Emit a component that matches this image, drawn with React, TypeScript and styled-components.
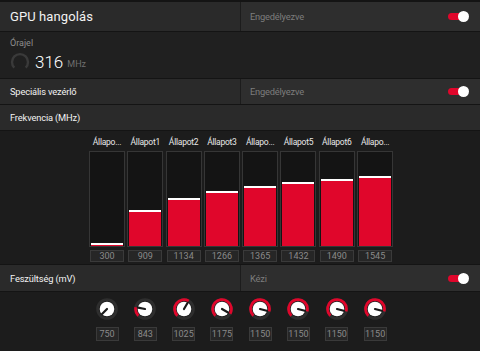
import React from "react";
import styled, { createGlobalStyle } from "styled-components";

const Global = createGlobalStyle`
  html, body { margin: 0; padding: 0; background: #0f0f0f; }
  body { font-family: Roboto, "Noto Sans", "Liberation Sans", sans-serif; }
  * { box-sizing: border-box; }
`;

const RED = "#e0062b";

const Page = styled.div`
  width: 480px;
  height: 351px;
  padding-top: 2px;
  display: flex;
  flex-direction: column;
  gap: 1px;
  background: #141414;
  overflow: hidden;
`;

const BarRow = styled.div<{ $h: number; $split?: boolean }>`
  height: ${(p) => p.$h}px;
  display: grid;
  grid-template-columns: ${(p) => (p.$split ? "240px 240px" : "1fr")};
  background: #2a2a2a;
  flex-shrink: 0;
`;

const Cell = styled.div`
  display: flex;
  align-items: center;
  padding-left: 10px;
`;

const RightCell = styled.div`
  display: flex;
  align-items: center;
  justify-content: space-between;
  padding-left: 9px;
  padding-right: 11px;
  background: #2e2e2e;
  border-left: 1px solid #1c1c1c;
`;

const Title = styled.span<{ $size?: number }>`
  color: #f2f2f2;
  font-size: ${(p) => p.$size ?? 9.3}px;
  letter-spacing: ${(p) => (p.$size ? "0.1px" : "-0.15px")};
`;

const Muted = styled.span`
  color: #7d7d7d;
  font-size: 9.3px;
  letter-spacing: -0.2px;
`;

const ToggleWrap = styled.div`
  position: relative;
  width: 21px;
  height: 11px;
`;

const Track = styled.div`
  position: absolute;
  left: 0;
  top: 2px;
  width: 16px;
  height: 7px;
  border-radius: 4px;
  background: ${RED};
`;

const Thumb = styled.div`
  position: absolute;
  right: 0;
  top: 0;
  width: 11px;
  height: 11px;
  border-radius: 50%;
  background: #ffffff;
`;

const Toggle = () => (
  <ToggleWrap>
    <Track />
    <Thumb />
  </ToggleWrap>
);

const ClockRow = styled.div`
  height: 46px;
  flex-shrink: 0;
  background: #202020;
  padding: 6px 0 0 10px;
  display: flex;
  flex-direction: column;
`;

const SmallLabel = styled.span`
  color: #8e8e8e;
  font-size: 9px;
  line-height: 11px;
`;

const ClockLine = styled.div`
  display: flex;
  align-items: center;
  margin-top: 3px;
  gap: 5px;
`;

const BigValue = styled.span`
  color: #ffffff;
  font-size: 17px;
  font-weight: 300;
  line-height: 20px;
`;

const Unit = styled.span`
  color: #6f6f6f;
  font-size: 9px;
  margin-top: 3px;
  margin-left: -1px;
`;

const ChartArea = styled.div`
  height: 133px;
  flex-shrink: 0;
  background: #1c1c1c;
  padding: 5px 0 0 89px;
  display: flex;
  gap: 2.3px;
`;

const Column = styled.div`
  width: 36px;
  display: flex;
  flex-direction: column;
  align-items: center;
`;

const ColLabel = styled.span`
  color: #e8e8e8;
  font-size: 8.5px;
  letter-spacing: -0.25px;
  line-height: 12px;
  height: 12px;
  white-space: nowrap;
  margin-bottom: 3px;
`;

const BarBox = styled.div`
  width: 36px;
  height: 96px;
  border: 1px solid #363636;
  background: #141414;
  display: flex;
  flex-direction: column;
  justify-content: flex-end;
  padding: 0 1px;
`;

const Fill = styled.div`
  width: 100%;
  background: ${RED};
  border-top: 2px solid #ffffff;
`;

const ValueBox = styled.div<{ $w?: number; $h?: number; $mt?: number }>`
  width: ${(p) => (p.$w ? `${p.$w}px` : "34px")};
  height: ${(p) => p.$h ?? 12}px;
  margin-top: ${(p) => p.$mt ?? 3}px;
  border: 1px solid #3a3a3a;
  background: #262626;
  color: #8a8a8a;
  font-size: 9px;
  line-height: ${(p) => (p.$h ?? 12) - 2}px;
  text-align: center;
`;

const KnobArea = styled.div`
  flex: 1;
  background: #1c1c1c;
  padding: 6px 0 0 89px;
  display: flex;
  gap: 2.3px;
`;

const KnobCol = styled.div`
  width: 36px;
  display: flex;
  flex-direction: column;
  align-items: center;
`;

const KnobSvg = styled.svg`
  display: block;
  width: 22px;
  height: 22px;
`;

const pt = (cx: number, cy: number, r: number, deg: number) => {
  const a = (deg * Math.PI) / 180;
  return [cx + r * Math.sin(a), cy - r * Math.cos(a)];
};

const Knob = ({ value }: { value: number }) => {
  const min = 750;
  const max = 1200;
  const f = Math.max(0, Math.min(1, (value - min) / (max - min)));
  const start = 225;
  const sweep = f * 270;
  const end = start + sweep;
  const c = 11;
  const r = 9.4;
  const [sx, sy] = pt(c, c, r, start);
  const [ex, ey] = pt(c, c, r, end);
  const [px, py] = pt(c, c, 7, end);
  const large = sweep > 180 ? 1 : 0;
  return (
    <KnobSvg viewBox="0 0 22 22">
      <circle cx={c} cy={c} r={r} fill="none" stroke="#2e2e2e" strokeWidth={2.8} />
      {sweep > 0.5 && (
        <path
          d={`M ${sx} ${sy} A ${r} ${r} 0 ${large} 1 ${ex} ${ey}`}
          fill="none"
          stroke={RED}
          strokeWidth={2.8}
        />
      )}
      <circle cx={c} cy={c} r={7.3} fill="#ffffff" />
      <line x1={c} y1={c} x2={px} y2={py} stroke="#1a1a1a" strokeWidth={2.2} strokeLinecap="round" />
    </KnobSvg>
  );
};

const Spinner = () => (
  <svg width="20" height="20" viewBox="0 0 20 20" style={{ display: "block" }}>
    <path d="M 4.3 15.7 A 8 8 0 1 1 15.7 15.7" fill="none" stroke="#3a3a3a" strokeWidth={2.4} />
  </svg>
);

const freq = [
  { label: "Állapo...", value: 300, h: 3 },
  { label: "Állapot1", value: 909, h: 36 },
  { label: "Állapot2", value: 1134, h: 48 },
  { label: "Állapot3", value: 1266, h: 55 },
  { label: "Állapo...", value: 1365, h: 60 },
  { label: "Állapot5", value: 1432, h: 64 },
  { label: "Állapot6", value: 1490, h: 67 },
  { label: "Állapo...", value: 1545, h: 70 },
];

const volts = [750, 843, 1025, 1175, 1150, 1150, 1150, 1150];

export default function App() {
  return (
    <>
      <Global />
      <Page>
        <BarRow $h={29} $split>
          <Cell>
            <Title $size={13}>GPU hangolás</Title>
          </Cell>
          <RightCell>
            <Muted>Engedélyezve</Muted>
            <Toggle />
          </RightCell>
        </BarRow>
        <ClockRow>
          <SmallLabel>Órajel</SmallLabel>
          <ClockLine>
            <Spinner />
            <BigValue>316</BigValue>
            <Unit>MHz</Unit>
          </ClockLine>
        </ClockRow>
        <BarRow $h={25} $split>
          <Cell>
            <Title>Speciális vezérlő</Title>
          </Cell>
          <RightCell>
            <Muted>Engedélyezve</Muted>
            <Toggle />
          </RightCell>
        </BarRow>
        <BarRow $h={25}>
          <Cell>
            <Title>Frekvencia (MHz)</Title>
          </Cell>
        </BarRow>
        <ChartArea>
          {freq.map((s, i) => (
            <Column key={i}>
              <ColLabel>{s.label}</ColLabel>
              <BarBox>
                <Fill style={{ height: `${s.h}px` }} />
              </BarBox>
              <ValueBox>{s.value}</ValueBox>
            </Column>
          ))}
        </ChartArea>
        <BarRow $h={26} $split>
          <Cell>
            <Title>Feszültség (mV)</Title>
          </Cell>
          <RightCell>
            <Muted>Kézi</Muted>
            <Toggle />
          </RightCell>
        </BarRow>
        <KnobArea>
          {volts.map((v, i) => (
            <KnobCol key={i}>
              <Knob value={v} />
              <ValueBox $w={23} $h={14} $mt={7}>{v}</ValueBox>
            </KnobCol>
          ))}
        </KnobArea>
      </Page>
    </>
  );
}
